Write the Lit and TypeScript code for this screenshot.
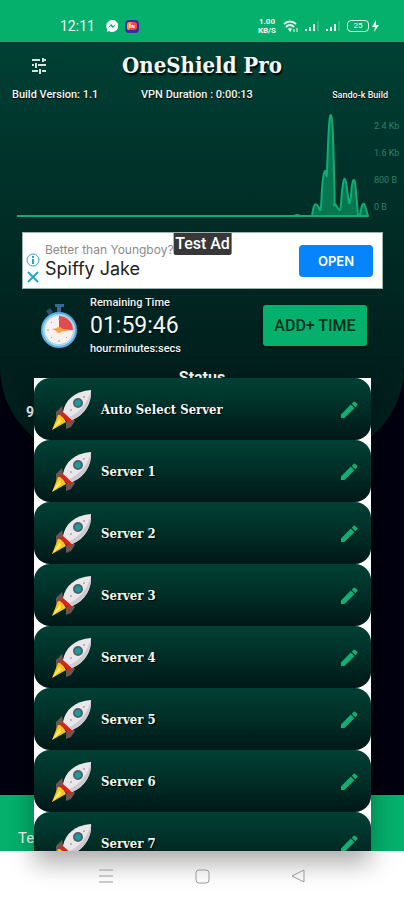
import { LitElement, html, svg, css } from "lit";
import { customElement, property } from "lit/decorators.js";

const rocket = svg`
  <path d="M12 18 L6 24 L6 33 L14 29Z M22 29 L25 33 L21 39 L16 41 L16 34Z" fill="#6d5552"/>
  <path d="M8 27 L2 42 L16 34 L12 27Z" fill="#f5c51c"/>
  <path d="M10 30 L2 42 L11 34Z" fill="#fff06a"/>
  <path d="M13 23 L10 27 L19 35 L23 31Z" fill="#d8251c"/>
  <path d="M13 24 C15 12 25 3 41 2 C42 14 35 27 22 32Z" fill="#eae7ea"/>
  <path d="M41 2 C42 14 35 27 22 32 L19 29 C30 25 38 14 41 2Z" fill="#cfcad0"/>
  <circle cx="28" cy="15" r="5" fill="#52606b"/>
  <circle cx="28" cy="15" r="3" fill="#16a09c"/>
  <circle cx="21" cy="22" r="1" fill="#aaa5ad"/>
  <circle cx="34" cy="9" r="1" fill="#aaa5ad"/>`;

@customElement("server-row")
export class ServerRow extends LitElement {
  @property() name = "";

  static styles = css`
    :host { display: block; }
    .row {
      display: flex; align-items: center; width: 100%; height: 62px;
      box-sizing: border-box; padding: 2px 13px 0 16px; border: 0; border-radius: 16px;
      background: linear-gradient(#004034, #003029 45%, #001818);
      color: #f2f6f4; text-align: left; cursor: pointer;
      font: bold 13px/18px "DejaVu Serif Condensed", "DejaVu Serif", serif;
    }
    .rocket { width: 42px; height: 44px; flex: none; }
    .name { flex: 1; padding-left: 9px; text-shadow: 1px 1px 1px #000; }
    .pencil { width: 18px; height: 18px; flex: none; }
  `;

  render() {
    return html`<button class="row">
      <svg class="rocket" viewBox="0 0 42 44" aria-hidden="true">${rocket}</svg>
      <span class="name">${this.name}</span>
      <svg class="pencil" viewBox="0 0 20 20" aria-hidden="true">
        <path d="M1 15 L12 4 L16 8 L5 19 L1 19Z M13 3 L15 1 Q16 0 17 1 L19 3 Q20 4 19 5 L17 7Z" fill="#12ae73"/>
      </svg>
    </button>`;
  }
}

@customElement("app-root")
export class AppRoot extends LitElement {
  static styles = css`
    :host {
      display: flex; flex-direction: column; min-height: 100vh; overflow: hidden;
      background: #fff; color: #f4f7f6; font-family: Roboto, sans-serif;
    }
    button { font-family: inherit; cursor: pointer; }
    svg { display: block; }
    .stage { position: relative; flex: 1; display: flex; flex-direction: column; background: #00000f; }
    .status {
      display: flex; align-items: center; height: 42px; box-sizing: border-box;
      padding: 10px 24px 0 60px; background: #04b06b;
    }
    .clock { font-size: 14px; line-height: 20px; flex: none; }
    .notes { display: flex; gap: 7px; margin-left: 11px; flex: 1; }
    .signals { display: flex; align-items: center; gap: 7px; }
    .rate {
      display: flex; flex-direction: column; text-align: center;
      font-size: 8px; line-height: 9px; font-weight: 700;
    }
    .battery { display: flex; align-items: center; gap: 2px; }
    .cell {
      width: 22px; height: 12px; box-sizing: border-box; border: 1px solid #e2f7ed;
      border-radius: 4px; font-size: 8px; line-height: 10px; text-align: center;
    }
    .panel {
      border-radius: 0 0 90px 90px; padding-bottom: 37px;
      background: linear-gradient(#004034, #003029 35%, #001f1d 78%, #001f1d);
    }
    .header { display: grid; grid-template-columns: 62px 1fr 62px; align-items: center; height: 46px; }
    .menu { justify-self: end; margin-right: 15px; padding: 0; border: 0; background: none; }
    .title {
      margin: 0; text-align: center; white-space: nowrap; text-shadow: 1px 2px 2px #000;
      font: bold 22px/30px "DejaVu Serif Condensed", "DejaVu Serif", serif;
    }
    .facts {
      display: grid; grid-template-columns: 129px 1fr auto; align-items: center;
      padding: 0 16px 0 12px; font-size: 11px; line-height: 14px; font-weight: 500;
      text-shadow: 0 1px 1px #000;
    }
    .maker { font-size: 9px; }
    .traffic { display: flex; padding: 8px 0 0 17px; }
    .plot { flex: 1; min-width: 0; height: 108px; }
    .scale {
      display: flex; flex-direction: column; gap: 13px; width: 30px; padding: 9px 0 0 5px;
      box-sizing: content-box; height: 99px;
      font-size: 9px; line-height: 14px; color: #2f8068; white-space: nowrap;
    }
    .ad {
      position: relative; display: flex; align-items: center; height: 57px; box-sizing: border-box;
      margin: 14px 21px 0 22px; padding: 0 9px 0 3px; background: #fff;
      border: 1px solid #9fb1ad; color: #222; font-family: Inter, sans-serif;
    }
    .choices { display: grid; gap: 3px; padding-top: 16px; flex: none; }
    .choices button { padding: 0; border: 0; background: none; }
    .copy { flex: 1; padding-left: 5px; white-space: nowrap; }
    .lead { font-size: 12px; line-height: 16px; color: #8b8b8b; }
    .brand { font-size: 18px; line-height: 22px; }
    .badge {
      position: absolute; left: 50%; top: 0; transform: translateX(-50%); padding: 0 2px;
      font: 500 16px/22px Roboto, sans-serif; color: #fff; background: #383838; border-radius: 0 0 2px 2px;
    }
    .open {
      width: 74px; height: 32px; border: 0; border-radius: 4px; background: #0684fc;
      color: #fff; font-size: 13px; font-weight: 600;
    }
    .time { display: flex; align-items: center; padding: 6px 37px 0 40px; }
    .left {
      flex: 1; padding: 1px 0 0 11px; font-size: 11px; line-height: 14px; font-weight: 500;
      text-shadow: 0 1px 1px #000;
    }
    .count { font-size: 23px; line-height: 32px; font-weight: 400; }
    .add {
      width: 104px; height: 41px; padding: 0; border: 0; border-radius: 3px; background: #04b06b;
      color: #052d22; font-size: 16px; font-weight: 500; box-shadow: 0 1px 3px #0008;
    }
    .state { margin: 12px 0 0; text-align: center; font-size: 16px; line-height: 20px; font-weight: 700; }
    .speed { padding: 16px 0 0 26px; font-size: 14px; line-height: 16px; font-weight: 700; }
    .terms {
      margin-top: auto; height: 56px; box-sizing: border-box; padding: 32px 18px 0; overflow: hidden;
      background: #04b06b; font-size: 15px; line-height: 22px;
    }
    .picker {
      position: absolute; top: 378px; bottom: 0; left: 34px; right: 33px;
      background: #fff; box-shadow: 0 12px 24px #0005;
    }
    .list { height: 100%; overflow: hidden; margin: 0; padding: 0; list-style: none; }
    .nav { display: flex; justify-content: space-around; align-items: center; height: 49px; padding: 0 58px; }
    .nav button { position: relative; padding: 0; border: 0; background: none; }
  `;

  private servers = ["Auto Select Server", ...Array.from({ length: 7 }, (_, i) => `Server ${i + 1}`)];

  private bars() {
    return html`<svg width="14" height="12" viewBox="0 0 14 12" aria-hidden="true">
      <path d="M1 9V11M5 7V11M9 4V11" stroke="#e6f9f0" stroke-width="2"/>
      <path d="M13 1V11" stroke="#5fcb9d" stroke-width="1"/>
    </svg>`;
  }

  private stopwatch() {
    return html`<svg width="39" height="46" viewBox="0 0 39 46" aria-hidden="true">
      <path d="M15 1H24V4H21V9H17V4H15Z" fill="#386b94"/>
      <path d="M6 8L10 5L13 9L9 12Z" fill="#28506f"/>
      <circle cx="19" cy="27" r="18" fill="#5eaee0"/>
      <circle cx="19" cy="27" r="16" fill="#a8d8f2"/>
      <circle cx="19" cy="27" r="14" fill="#f7f1ee"/>
      <path d="M19 27V13A14 14 0 0 1 33 27Z" fill="#e04b50"/>
      <path d="M19 15V17M19 37V39M7 27H9M29 27H31M11 19L12 20M11 35L12 34M27 35L26 34" stroke="#9b9fa6"/>
      <path d="M12 26L19 25L30 27L19 29Z" fill="#f59a3c"/>
      <circle cx="19" cy="27" r="3" fill="#f7a54b"/>
    </svg>`;
  }

  render() {
    return html`
      <div class="stage">
        <div class="status">
          <span class="clock">12:11</span>
          <div class="notes">
            <svg width="12" height="12" viewBox="0 0 12 12" aria-hidden="true">
              <path d="M6 0A6 6 0 1 1 3 11L1 12V9A6 6 0 0 1 6 0Z" fill="#fff"/>
              <path d="M2 8L5 4L7 6L10 4L7 8L5 6Z" fill="#04a563"/>
            </svg>
            <svg width="14" height="13" viewBox="0 0 14 13" aria-hidden="true">
              <rect width="14" height="13" rx="4" fill="#3b2aa8"/>
              <rect x="2" y="2" width="10" height="8" rx="3" fill="#f0484e"/>
              <path d="M2 5Q2 2 5 2H7L4 10Q2 10 2 8Z" fill="#ff9b32"/>
              <path d="M5 4V8M7 8V5L9 8V5" stroke="#fff" fill="none"/>
            </svg>
          </div>
          <div class="signals">
            <div class="rate"><span>1.00</span><span>KB/S</span></div>
            <svg width="15" height="13" viewBox="0 0 15 13" fill="none" stroke="#f0fbf6" stroke-width="2" aria-hidden="true">
              <path d="M1 4Q7 -1 13 4M3 7Q7 3 11 7"/>
              <path d="M5 9Q7 7 9 9L7 12Z" fill="#f0fbf6" stroke="none"/>
              <path d="M11 9V12M14 8V12" stroke-width="1"/>
            </svg>
            ${this.bars()}${this.bars()}
            <div class="battery">
              <div class="cell">25</div>
              <svg width="9" height="12" viewBox="0 0 9 12" aria-hidden="true"><path d="M5 0L1 7H4L3 12L8 5H5Z" fill="#fff"/></svg>
            </div>
          </div>
        </div>

        <main class="panel">
          <div class="header">
            <button class="menu" aria-label="Settings">
              <svg width="16" height="17" viewBox="0 0 16 17" fill="none" stroke="#d5e2de" stroke-width="2">
                <path d="M1 3H9M13 3H15M1 8H3M7 8H15M1 14H7M11 14H15" />
                <path d="M12 1V5M5 6V11M9 12V17"/>
              </svg>
            </button>
            <h1 class="title">OneShield Pro</h1>
          </div>
          <div class="facts">
            <span>Build Version: 1.1</span>
            <span>VPN Duration : 0:00:13</span>
            <span class="maker">Sando-k Build</span>
          </div>
          <div class="traffic">
            <svg class="plot" viewBox="0 0 352 108" preserveAspectRatio="none" role="img" aria-label="Traffic">
              <path d="M0 106H277L280 105L284 106H295C297 91 299 92 303 100C305 104 304 64 308 61C309 59 310 73 310 62C312 3 313 5 314 5C315 5 316 15 317 65C319 110 315 90 319 95C322 100 323 104 324 94C326 66 328 62 330 79C332 95 332 98 334 86C335 67 338 64 339 82L341 105H343C345 92 347 92 348 96L351 106Z"
                fill="#087650" stroke="#12ab74" stroke-width="2" stroke-linejoin="round"/>
            </svg>
            <div class="scale"><span>2.4 Kb</span><span>1.6 Kb</span><span>800 B</span><span>0 B</span></div>
          </div>

          <section class="ad">
            <div class="choices">
              <button aria-label="Ad information">
                <svg width="14" height="14" viewBox="0 0 14 14" fill="none" stroke="#1fabc4">
                  <circle cx="7" cy="7" r="6"/><path d="M7 3V5M7 6V11" stroke-width="2"/>
                </svg>
              </button>
              <button aria-label="Close ad">
                <svg width="14" height="14" viewBox="0 0 14 14" stroke="#1fabc4" stroke-width="2"><path d="M2 2L12 12M12 2L2 12"/></svg>
              </button>
            </div>
            <div class="copy">
              <div class="lead">Better than Youngboy?</div>
              <div class="brand">Spiffy Jake</div>
            </div>
            <button class="open">OPEN</button>
            <span class="badge">Test Ad</span>
          </section>

          <section class="time">
            ${this.stopwatch()}
            <div class="left">
              <div>Remaining Time</div>
              <div class="count">01:59:46</div>
              <div>hour:minutes:secs</div>
            </div>
            <button class="add">ADD+ TIME</button>
          </section>
          <h2 class="state">Status</h2>
          <div class="speed">9</div>
        </main>
        <footer class="terms">Te</footer>

        <div class="picker">
          <ul class="list">
            ${this.servers.map((s) => html`<li><server-row name=${s}></server-row></li>`)}
          </ul>
        </div>
      </div>
      <nav class="nav">
        <button aria-label="Recent apps"><svg width="16" height="16" viewBox="0 0 16 16" stroke="#999"><path d="M1 2H15M1 8H15M1 14H15"/></svg></button>
        <button aria-label="Home"><svg width="16" height="16" viewBox="0 0 16 16" fill="none" stroke="#999"><rect x="2" y="2" width="13" height="13" rx="3"/></svg></button>
        <button aria-label="Back"><svg width="16" height="16" viewBox="0 0 16 16" fill="none" stroke="#999"><path d="M14 2V14L2 8Z" stroke-linejoin="round"/></svg></button>
      </nav>
    `;
  }
}
